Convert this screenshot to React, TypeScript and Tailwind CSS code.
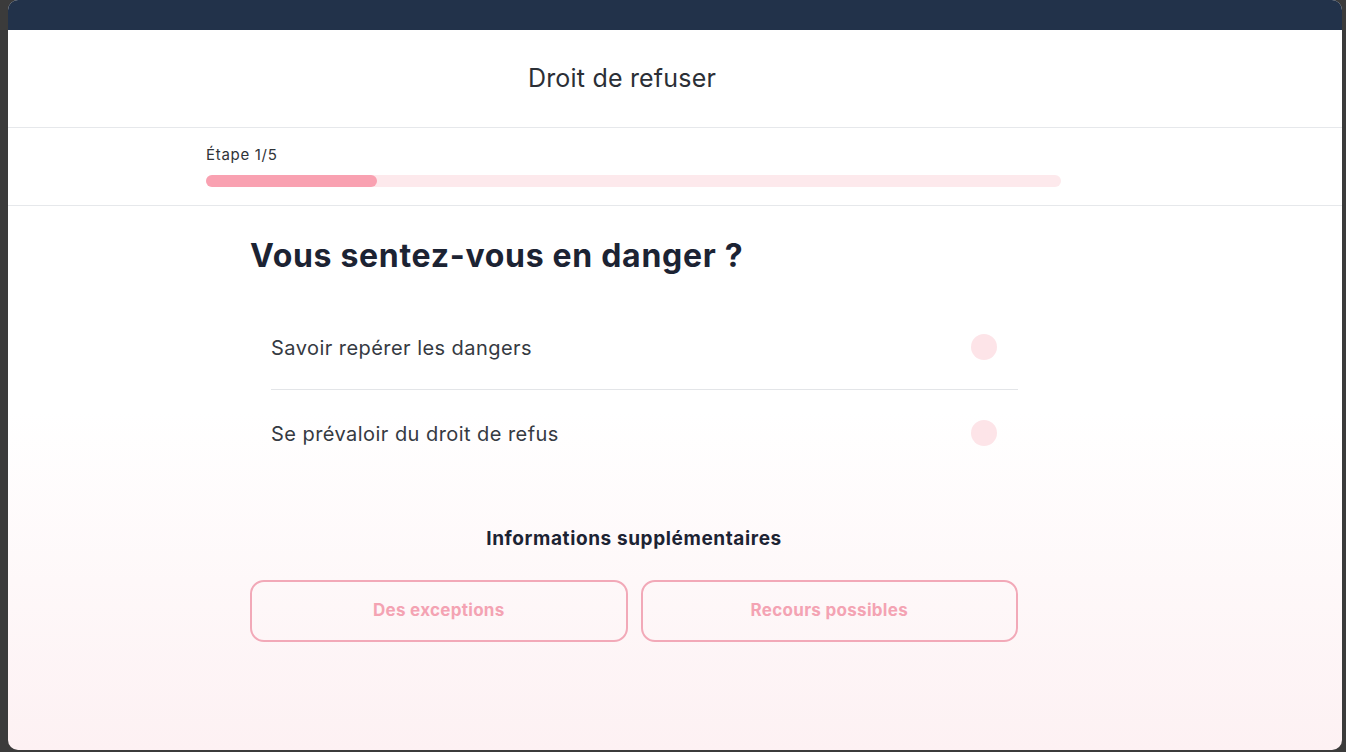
const items = ['Savoir repérer les dangers', 'Se prévaloir du droit de refus']
const extras = ['Des exceptions', 'Recours possibles']

export default function App() {
  const step = 1
  const total = 5

  return (
    <div className="h-[752px] w-[1346px] bg-[#3b3b3b] pl-2 pr-1 pb-[2px] font-['Inter',_'Noto_Sans',_sans-serif]">
      <div className="flex h-full flex-col overflow-hidden rounded-[10px] bg-gradient-to-b from-white from-55% to-[#fdf1f3]">
        <div className="h-[30px] shrink-0 bg-[#22324a]" />

        <header className="flex h-[98px] shrink-0 items-center justify-center border-b border-[#e6e8eb] pr-[106px]">
          <h1 className="text-[25px] tracking-[0.2px] text-[#2b2f36]">Droit de refuser</h1>
        </header>

        <div className="h-[78px] shrink-0 border-b border-[#e6e8eb] pt-[17px]">
          <div className="ml-[198px] w-[855px]">
            <p className="text-[15px] leading-[20px] tracking-[0.7px] text-[#2f3338]">Étape {step}/{total}</p>
            <div className="mt-[10px] h-[12px] w-full rounded-full bg-[#fde9ec]">
              <div
                className="h-full rounded-full bg-[#f9a1b1]"
                style={{ width: `${(step / total) * 100}%` }}
              />
            </div>
          </div>
        </div>

        <main className="ml-[242px] w-[768px] pt-[30px]">
          <h2 className="text-[32px] font-bold leading-[40px] tracking-[0.7px] text-[#1c2333]">
            Vous sentez-vous en danger ?
          </h2>

          <ul className="ml-[21px] mt-[28px]">
            {items.map((label, i) => (
              <li
                key={label}
                className={`flex h-[86px] items-center justify-between pr-[21px] ${
                  i < items.length - 1 ? 'border-b border-[#e3e5e8]' : ''
                }`}
              >
                <span className="pt-[2px] text-[20px] tracking-[0.45px] text-[#353a42]">{label}</span>
                <span className="h-[26px] w-[26px] rounded-full bg-[#fde4e8]" />
              </li>
            ))}
          </ul>

          <p className="mt-[49px] text-center text-[19px] font-bold leading-[28px] tracking-[0.6px] text-[#1c2333]">
            Informations supplémentaires
          </p>

          <div className="mt-[27px] grid grid-cols-2 gap-[13px]">
            {extras.map((label) => (
              <button
                key={label}
                className="h-[62px] rounded-[14px] border-2 border-[#f2a9b8] text-[17px] font-bold tracking-[0.3px] text-[#f4a3b3]"
              >
                {label}
              </button>
            ))}
          </div>
        </main>
      </div>
    </div>
  )
}
